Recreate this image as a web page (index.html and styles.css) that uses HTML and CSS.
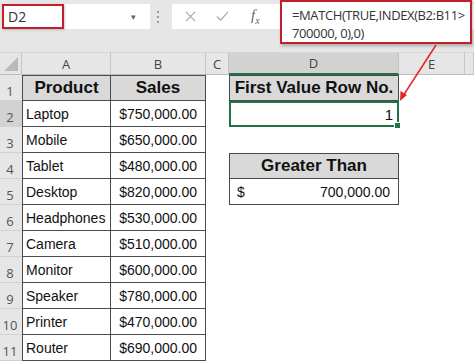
FILE: index.html
```html
<!DOCTYPE html>
<html lang="en">
<head>
    <meta charset="UTF-8">
    <title>MATCH first value greater than</title>
    <link rel="stylesheet" href="styles.css">
</head>
<body>
    <div class="app">
        <!-- formula bar -->
        <div class="top">
            <div class="toolbar">
                <div class="namebox">
                    <div class="name">D2</div>
                    <span class="caret">&#9662;</span>
                </div>
                <div class="grip"><i></i><i></i><i></i></div>
                <div class="fbar">
                    <svg class="ico cancel" viewBox="0 0 12 12"><path d="M1 1L11 11M11 1L1 11"/></svg>
                    <svg class="ico enter" viewBox="0 0 14 12"><path d="M1 6L5 10L13 1"/></svg>
                    <span class="fx">f<sub>x</sub></span>
                </div>
            </div>
        </div>

        <div class="formula-pop">=MATCH(TRUE,INDEX(B2:B11&gt;<br>700000, 0),0)</div>

        <!-- sheet -->
        <div class="sheet">
            <div class="ch corner"><svg viewBox="0 0 16 16"><polygon points="15,1 15,15 1,15"/></svg></div>
            <div class="ch">A</div>
            <div class="ch">B</div>
            <div class="ch">C</div>
            <div class="ch sel">D</div>
            <div class="ch">E</div>
            <div class="ch"></div>

            <div class="rh">1</div>
            <div class="c a head top-row">Product</div>
            <div class="c b head top-row">Sales</div>
            <div class="c d head box-top">First Value Row No.</div>

            <div class="rh sel">2</div>
            <div class="c a">Laptop</div>
            <div class="c b">$750,000.00</div>
            <div class="c d active">1</div>

            <div class="rh">3</div>
            <div class="c a">Mobile</div>
            <div class="c b">$650,000.00</div>

            <div class="rh">4</div>
            <div class="c a">Tablet</div>
            <div class="c b">$480,000.00</div>
            <div class="c d head box-top">Greater Than</div>

            <div class="rh">5</div>
            <div class="c a">Desktop</div>
            <div class="c b">$820,000.00</div>
            <div class="c d money"><span>$</span><span>700,000.00</span></div>

            <div class="rh">6</div>
            <div class="c a">Headphones</div>
            <div class="c b">$530,000.00</div>

            <div class="rh">7</div>
            <div class="c a">Camera</div>
            <div class="c b">$510,000.00</div>

            <div class="rh">8</div>
            <div class="c a">Monitor</div>
            <div class="c b">$600,000.00</div>

            <div class="rh">9</div>
            <div class="c a">Speaker</div>
            <div class="c b">$780,000.00</div>

            <div class="rh">10</div>
            <div class="c a">Printer</div>
            <div class="c b">$470,000.00</div>

            <div class="rh">11</div>
            <div class="c a">Router</div>
            <div class="c b">$690,000.00</div>
        </div>

        <!-- callout arrow -->
        <svg class="arrow" width="474" height="362" viewBox="0 0 474 362">
            <line x1="436" y1="45" x2="403" y2="96"/>
            <polygon points="400,101 400.5,91 407,95"/>
        </svg>
    </div>
</body>
</html>
```

FILE: styles.css
```css
body {
    margin: 0;
    background: #fff;
    font-family: "Liberation Sans", Arial, sans-serif;
}

.app {
    width: 474px;
    height: 362px;
    position: relative;
    overflow: hidden;
    background: #fff;
}

/* formula bar */
.top {
    height: 52px;
    background: #e6e6e6;
    padding-top: 4px;
    box-sizing: border-box;
}
.toolbar {
    display: flex;
    align-items: center;
    height: 25px;
}
.namebox {
    width: 148px;
    height: 25px;
    margin-left: 2px;
    background: #fff;
    display: flex;
    align-items: center;
}
.name {
    width: 62px;
    height: 25px;
    box-sizing: border-box;
    border: 2px solid #c0202a;
    padding-left: 4px;
    display: flex;
    align-items: center;
    font-family: "Open Sans", sans-serif;
    font-size: 14px;
    color: #333;
    box-shadow: 1px 1px 2px rgba(0, 0, 0, 0.2);
}
.caret {
    margin-left: auto;
    margin-right: 14px;
    font-size: 9px;
    color: #666;
}
.grip {
    width: 12px;
    margin-left: 2px;
    display: flex;
    flex-direction: column;
    align-items: center;
    gap: 3px;
}
.grip i {
    width: 2px;
    height: 2px;
    background: #9a9a9a;
}
.fbar {
    flex: 1;
    height: 25px;
    margin-left: 8px;
    background: #fff;
    display: flex;
    align-items: center;
}
.ico {
    fill: none;
    stroke: #a8a8a8;
    stroke-width: 1.3;
}
.cancel {
    width: 11px;
    height: 11px;
    margin-left: 13px;
}
.enter {
    width: 13px;
    height: 11px;
    margin-left: 20px;
}
.fx {
    margin-left: 22px;
    font-family: "Liberation Serif", serif;
    font-style: italic;
    font-size: 15px;
    color: #666;
}
.fx sub {
    font-size: 10px;
}

.formula-pop {
    position: absolute;
    left: 280px;
    top: 0;
    width: 192px;
    height: 44px;
    box-sizing: border-box;
    border: 2px solid #c0202a;
    background: #fff;
    padding: 4px 0 0 10px;
    font-family: "Open Sans", sans-serif;
    font-size: 13px;
    letter-spacing: -0.4px;
    line-height: 18px;
    color: #333;
    white-space: nowrap;
    box-shadow: 1px 2px 3px rgba(0, 0, 0, 0.25);
}

/* sheet grid */
.sheet {
    display: grid;
    grid-template-columns: 22px 89px 95px 23px 170px 66px 9px;
    grid-template-rows: 23px repeat(11, 26px);
}
.ch {
    background: #e6e6e6;
    border-top: 1px solid #d6d6d6;
    border-right: 1px solid #c6c6c6;
    border-bottom: 1px solid #bdbdbd;
    box-sizing: border-box;
    display: flex;
    align-items: center;
    justify-content: center;
    font-family: "Open Sans", sans-serif;
    font-size: 13px;
    color: #444;
}
.ch.sel {
    background: #d2d2d2;
    border-bottom: 2px solid #217346;
}
.corner {
    align-items: flex-end;
    justify-content: flex-end;
    padding: 0 2px 2px 0;
}
.corner svg {
    width: 16px;
    height: 16px;
    fill: #b9b9b9;
}
.rh {
    grid-column: 1;
    background: #e6e6e6;
    border-bottom: 1px solid #d2d2d2;
    box-sizing: border-box;
    display: flex;
    align-items: center;
    justify-content: center;
    padding: 6px 2px 0 0;
    font-family: "Open Sans", sans-serif;
    font-size: 13px;
    color: #555;
}
.rh.sel {
    background: #d2d2d2;
}

.c {
    display: flex;
    align-items: center;
    box-sizing: border-box;
    border-right: 1px solid #4a4a4a;
    border-bottom: 1px solid #4a4a4a;
    font-size: 14px;
    color: #111;
    white-space: nowrap;
}
.a {
    border-left: 1px solid #4a4a4a;
    padding-left: 3px;
}
.b {
    justify-content: flex-end;
    padding-right: 8px;
}
.head {
    background: #d9d9d9;
    font-weight: bold;
    font-size: 17px;
    justify-content: center;
    padding: 0;
}
.top-row {
    border-top: 1px solid #4a4a4a;
}
.d {
    grid-column: 5;
    border-left: 1px solid #4a4a4a;
}
.box-top {
    border-top: 1px solid #4a4a4a;
}
.active {
    position: relative;
    border: 2px solid #217346;
    justify-content: flex-end;
    padding-right: 4px;
    font-size: 15px;
}
.active::after {
    content: "";
    position: absolute;
    right: -4px;
    bottom: -4px;
    width: 5px;
    height: 5px;
    background: #217346;
    border: 1px solid #fff;
}
.money {
    justify-content: space-between;
    padding: 0 8px 0 7px;
}

.arrow {
    position: absolute;
    left: 0;
    top: 0;
    pointer-events: none;
}
.arrow line {
    stroke: #e0262b;
    stroke-width: 1.5;
}
.arrow polygon {
    fill: #e0262b;
}
```
